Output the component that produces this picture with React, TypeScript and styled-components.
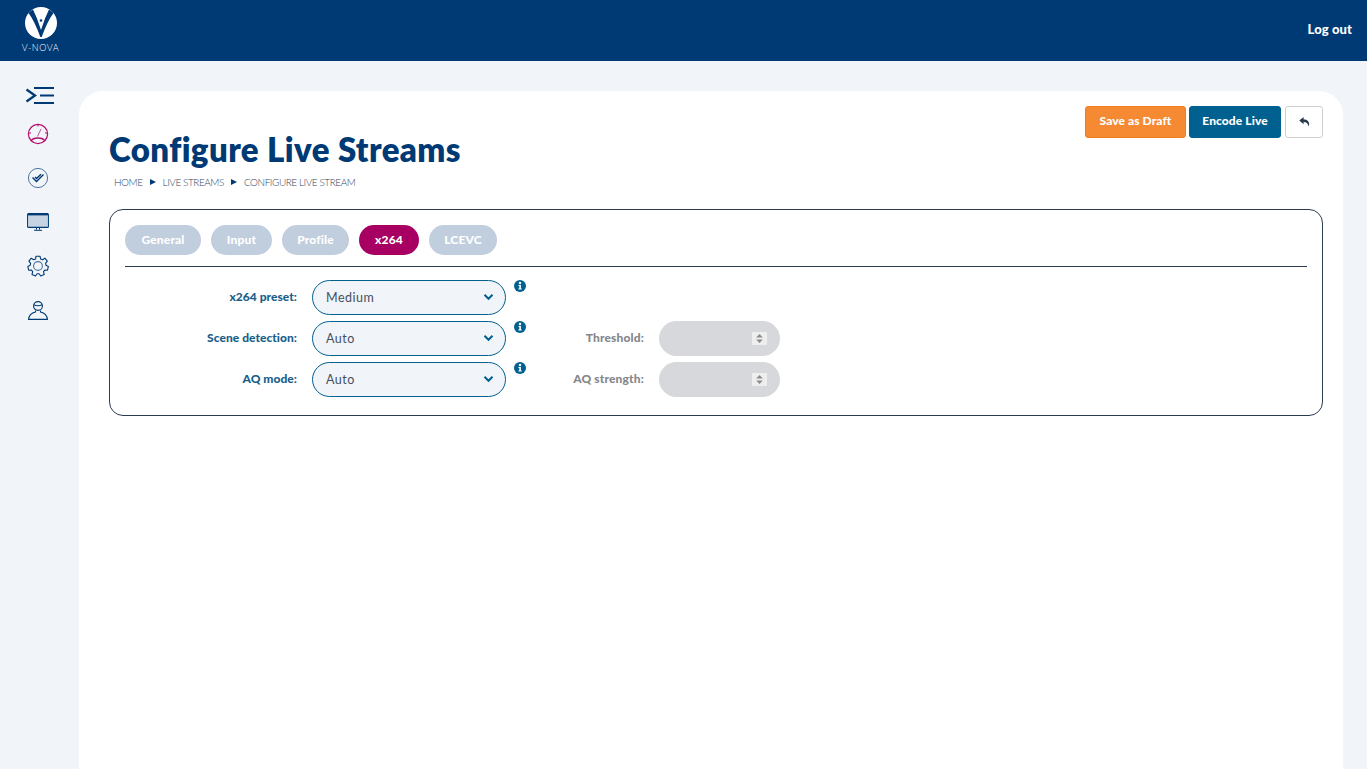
import React from "react";
import styled, { createGlobalStyle } from "styled-components";

const Global = createGlobalStyle`
  html, body { margin: 0; padding: 0; background: #f1f4f8; }
  body { font-family: "Lato", "Liberation Sans", sans-serif; overflow: hidden; }
`;

const Page = styled.div`
  width: 1367px;
  height: 769px;
  display: flex;
  flex-direction: column;
  overflow: hidden;
`;

const TopBar = styled.header`
  height: 61px;
  flex: none;
  background: #003a75;
  display: flex;
  align-items: center;
  justify-content: space-between;
  padding: 0 15px 0 22px;
`;

const LogoBlock = styled.div`
  display: flex;
  flex-direction: column;
  align-items: center;
  width: 37px;
  gap: 2px;
  margin-top: -2px;
`;

const LogoText = styled.span`
  color: #fff;
  font-size: 9px;
  line-height: 11px;
  font-weight: 300;
  letter-spacing: 0.6px;
  white-space: nowrap;
`;

const LogOut = styled.a`
  color: #fff;
  font-size: 13px;
  font-weight: 900;
  letter-spacing: 0.1px;
  margin-top: -4px;
`;

const Body = styled.div`
  flex: 1;
  display: flex;
  min-height: 0;
`;

const Side = styled.nav`
  width: 79px;
  flex: none;
  display: flex;
  flex-direction: column;
  align-items: center;
  padding: 26px 3px 0 0;
  box-sizing: border-box;
`;

const SideIcon = styled.div<{ $first?: boolean }>`
  height: ${(p) => (p.$first ? 17 : 24)}px;
  margin-top: ${(p) => (p.$first ? 0 : 20)}px;
  margin-bottom: ${(p) => (p.$first ? -2 : 0)}px;
  padding-left: ${(p) => (p.$first ? 4 : 0)}px;
  display: flex;
  align-items: center;
  justify-content: center;
  width: 36px;
`;

const Main = styled.main`
  width: 1264px;
  margin-top: 30px;
  background: #fff;
  border-radius: 24px 24px 0 0;
  padding: 15px 20px 0 30px;
  box-sizing: border-box;
`;

const TitleRow = styled.div`
  display: flex;
  justify-content: space-between;
  align-items: flex-start;
  height: 103px;
`;

const TitleBlock = styled.div`
  padding-top: 23px;
`;

const Title = styled.h1`
  margin: 0;
  color: #003a75;
  font-size: 33px;
  line-height: 40px;
  font-weight: 800;
  letter-spacing: 0.41px;
  white-space: nowrap;
`;

const Crumbs = styled.div`
  display: flex;
  align-items: center;
  margin: 6px 0 0 5px;
  font-size: 10px;
  line-height: 14px;
  font-weight: 300;
  letter-spacing: -0.45px;
  color: #2f4763;
  gap: 6px;
`;

const CrumbArrow = styled.span`
  width: 0;
  height: 0;
  border-left: 6px solid #003a75;
  border-top: 3px solid transparent;
  border-bottom: 3px solid transparent;
  margin: 0 1px;
`;

const Actions = styled.div`
  display: flex;
  gap: 3px;
`;

const Btn = styled.button<{ $bg: string; $line: string; $w: number }>`
  height: 32px;
  width: ${(p) => p.$w}px;
  background: ${(p) => p.$bg};
  border: 1px solid ${(p) => p.$line};
  border-radius: 3px;
  color: #fff;
  font-family: inherit;
  font-size: 12px;
  font-weight: 900;
  letter-spacing: 0.1px;
  padding: 0 0 3px;
  margin: 0;
  display: flex;
  align-items: center;
  justify-content: center;
`;

const BackBtn = styled(Btn)`
  margin-left: 1px;
  padding: 0;
`;

const Panel = styled.section`
  width: 1214px;
  height: 207px;
  box-sizing: border-box;
  border: 1px solid #2b3b4e;
  border-radius: 14px;
  padding: 15px 15px 0;
`;

const Tabs = styled.div`
  display: flex;
  gap: 10px;
  padding-bottom: 11px;
  border-bottom: 1px solid #2b3b4e;
`;

const Tab = styled.div<{ $active?: boolean; $w: number }>`
  width: ${(p) => p.$w}px;
  height: 30px;
  border-radius: 15px;
  background: ${(p) => (p.$active ? "#a80062" : "#c0cede")};
  color: #fff;
  font-size: 12px;
  font-weight: 900;
  letter-spacing: 0.15px;
  display: flex;
  align-items: center;
  justify-content: center;
  padding-bottom: 1px;
  box-sizing: border-box;
`;

const Form = styled.div`
  display: grid;
  grid-template-columns: 172px 194px 123px 121px;
  grid-auto-rows: 35px;
  column-gap: 15px;
  row-gap: 6px;
  margin-top: 13px;
`;

const Label = styled.label<{ $muted?: boolean }>`
  color: ${(p) => (p.$muted ? "#85878c" : "#1a5f8a")};
  font-size: 12px;
  font-weight: 900;
  letter-spacing: ${(p) => (p.$muted ? 0.15 : 0.04)}px;
  text-align: right;
  padding-bottom: 2px;
  white-space: nowrap;
  display: flex;
  align-items: center;
  justify-content: flex-end;
`;

const SelectBox = styled.div`
  box-sizing: border-box;
  border: 1px solid #00608f;
  border-radius: 17.5px;
  background: #f1f4f8;
  color: #44505f;
  font-size: 12.5px;
  letter-spacing: 0.5px;
  display: flex;
  align-items: center;
  justify-content: space-between;
  padding: 0 11px 1px 13px;
`;

const InfoCell = styled.div`
  display: flex;
  justify-content: space-between;
  margin-left: -7px;
`;

const InfoMark = styled.div`
  width: 12px;
  height: 12px;
`;

const NumberBox = styled.div`
  box-sizing: border-box;
  border-radius: 17.5px;
  background: #d7d8dc;
  display: flex;
  align-items: center;
  justify-content: flex-end;
  padding: 0 13px 0 0;
`;

const Spinner = styled.div`
  width: 15px;
  height: 13px;
  background: #eeeeef;
  display: flex;
  align-items: center;
  justify-content: center;
`;

const Chevron = () => (
  <svg width="11" height="8" viewBox="0 0 11 8">
    <path d="M1.5 1.8 5.5 5.8 9.5 1.8" fill="none" stroke="#00608f" strokeWidth="2" />
  </svg>
);

const Info = () => (
  <svg width="12" height="12" viewBox="0 0 12 12" style={{ display: "block" }}>
    <circle cx="6" cy="6" r="6" fill="#00608f" />
    <circle cx="6" cy="3" r="1.25" fill="#fff" />
    <path d="M4.500 5h2.400v3.600h.8v1H4.400v-1h.9V6h-.8z" fill="#fff" />
  </svg>
);

const Spin = () => (
  <svg width="7" height="9" viewBox="0 0 7 9">
    <path d="M3.500 0 6.800 3.600H.2zM3.500 9 .2 5.400h6.600z" fill="#8b8b8e" />
  </svg>
);

const Logo = () => (
  <svg width="34" height="34" viewBox="0 0 34 34">
    <circle cx="17" cy="17" r="16" fill="#fff" />
    <path d="M4.500 7 Q6.500 4.800 9 3.500 Q11 8 13 12.500 L17 24 L21 12.500 Q23 8 25 3.500 Q27.500 4.800 29.500 7 Q23.500 15 17.700 31 L16.300 31 Q10.500 15 4.500 7Z" fill="#003a75" />
    <circle cx="17" cy="14.500" r="1.300" fill="#003a75" />
  </svg>
);

const navy = "#003a75";
const pink = "#b40f6e";

const MenuIcon = () => (
  <svg width="30" height="17" viewBox="0 0 30 17" fill="none" stroke={navy} strokeWidth="2">
    <path d="M1.500 2.500 10 8.500 1.500 14.500" strokeWidth="2.300" />
    <path d="M9 1h20M15 8.500h14M9 16h20" />
  </svg>
);

const GaugeIcon = () => (
  <svg width="22" height="22" viewBox="0 0 22 22" fill="none" stroke={pink} strokeWidth="1.200">
    <circle cx="11" cy="11" r="9.600" />
    <path d="M4 18 C6 14 16 14 18 18" strokeWidth="1.400" />
    <path d="M10.500 13.500 14 6" strokeWidth="1" opacity="0.7" />
    <path d="M11 1.500v2M2 10h2M18 10h2" strokeWidth="1" />
  </svg>
);

const CheckIcon = () => (
  <svg width="22" height="22" viewBox="0 0 22 22" fill="none">
    <circle cx="11" cy="11" r="9.600" stroke="#4d77a2" strokeWidth="1" />
    <path d="M5.500 10.500 9.500 14.500 16.500 7.500 M8 10 9.500 11.500 14 7.200" stroke={navy} strokeWidth="1.400" />
  </svg>
);

const ScreenIcon = () => (
  <svg width="22" height="18" viewBox="0 0 22 18" fill="none">
    <rect x="1.500" y="1.500" width="19" height="12.500" fill="#c5d3e2" />
    <path d="M.6 13.400V1.600Q.6.6 1.600.6H20.400Q21.400.6 21.400 1.600V13.400Q21.400 14.400 20.400 14.400H1.600Q.6 14.400.6 13.400Z" stroke={navy} strokeWidth="1.100" />
    <path d="M1 1.500h20" stroke={navy} strokeWidth="1.800" />
    <path d="M9.500 15v1.600M12.500 15v1.600M7 17.300h8" stroke={navy} strokeWidth="1" />
  </svg>
);

const GearIcon = () => (
  <svg width="22" height="22" viewBox="0 0 22 22" fill="none" stroke={navy} strokeWidth="1.100">
    <path d="M9 1.200h4l.6 2.700 1.900.8 2.400-1.500 2.400 3-1.700 2.100.4 2 2.400 1.100-.9 3.800-2.700-.1-1.300 1.600.7 2.700-3.500 1.600-1.600-2.200h-2l-1.600 2.200-3.500-1.600.7-2.700-1.300-1.600-2.700.1-.9-3.800 2.400-1.100.4-2-1.700-2.100 2.400-3 2.400 1.500 1.900-.8z" strokeLinejoin="round" />
    <circle cx="11" cy="11" r="4.400" stroke="#4d77a2" />
  </svg>
);

const UserIcon = () => (
  <svg width="20" height="19" viewBox="0 0 20 19" fill="none" stroke={navy} strokeWidth="1.100">
    <circle cx="10" cy="5" r="4.400" />
    <path d="M5.800 3.800 Q10 5.600 14.200 3.800" />
    <path d="M7.500 9.500v1.500Q1 12.500.6 18.400H19.400Q19 12.500 12.500 11V9.500" />
  </svg>
);

const BackArrow = () => (
  <svg width="11" height="10" viewBox="0 0 11 10">
    <path d="M4.600 0 .3 3.600 4.600 7.200V5.100Q8.200 4.900 9.800 9.500 11.400 2.700 4.600 2.200Z" fill="#2b3b4e" />
  </svg>
);

const selectRows = [
  { label: "x264 preset:", value: "Medium", extra: null as string | null },
  { label: "Scene detection:", value: "Auto", extra: "Threshold:" },
  { label: "AQ mode:", value: "Auto", extra: "AQ strength:" },
];

const tabs = [
  { name: "General", w: 76 },
  { name: "Input", w: 61 },
  { name: "Profile", w: 67 },
  { name: "x264", w: 60, active: true },
  { name: "LCEVC", w: 68 },
];

export default function App() {
  return (
    <Page>
      <Global />
      <TopBar>
        <LogoBlock>
          <Logo />
          <LogoText>V-NOVA</LogoText>
        </LogoBlock>
        <LogOut>Log out</LogOut>
      </TopBar>
      <Body>
        <Side>
          <SideIcon $first><MenuIcon /></SideIcon>
          <SideIcon><GaugeIcon /></SideIcon>
          <SideIcon><CheckIcon /></SideIcon>
          <SideIcon><ScreenIcon /></SideIcon>
          <SideIcon><GearIcon /></SideIcon>
          <SideIcon><UserIcon /></SideIcon>
        </Side>
        <Main>
          <TitleRow>
            <TitleBlock>
              <Title>Configure Live Streams</Title>
              <Crumbs>
                <span>HOME</span>
                <CrumbArrow />
                <span>LIVE STREAMS</span>
                <CrumbArrow />
                <span>CONFIGURE LIVE STREAM</span>
              </Crumbs>
            </TitleBlock>
            <Actions>
              <Btn $bg="#f68a33" $line="#ee7f1e" $w={101}>Save as Draft</Btn>
              <Btn $bg="#00608f" $line="#00608f" $w={92}>Encode Live</Btn>
              <BackBtn $bg="#fff" $line="#cfcfcf" $w={38}><BackArrow /></BackBtn>
            </Actions>
          </TitleRow>
          <Panel>
            <Tabs>
              {tabs.map((t) => (
                <Tab key={t.name} $w={t.w} $active={t.active}>{t.name}</Tab>
              ))}
            </Tabs>
            <Form>
              {selectRows.map((r) => (
                <React.Fragment key={r.label}>
                  <Label>{r.label}</Label>
                  <SelectBox>
                    {r.value}
                    <Chevron />
                  </SelectBox>
                  <InfoCell>
                    <InfoMark><Info /></InfoMark>
                    {r.extra && <Label $muted>{r.extra}</Label>}
                  </InfoCell>
                  {r.extra ? (
                    <NumberBox>
                      <Spinner><Spin /></Spinner>
                    </NumberBox>
                  ) : (
                    <div />
                  )}
                </React.Fragment>
              ))}
            </Form>
          </Panel>
        </Main>
      </Body>
    </Page>
  );
}
